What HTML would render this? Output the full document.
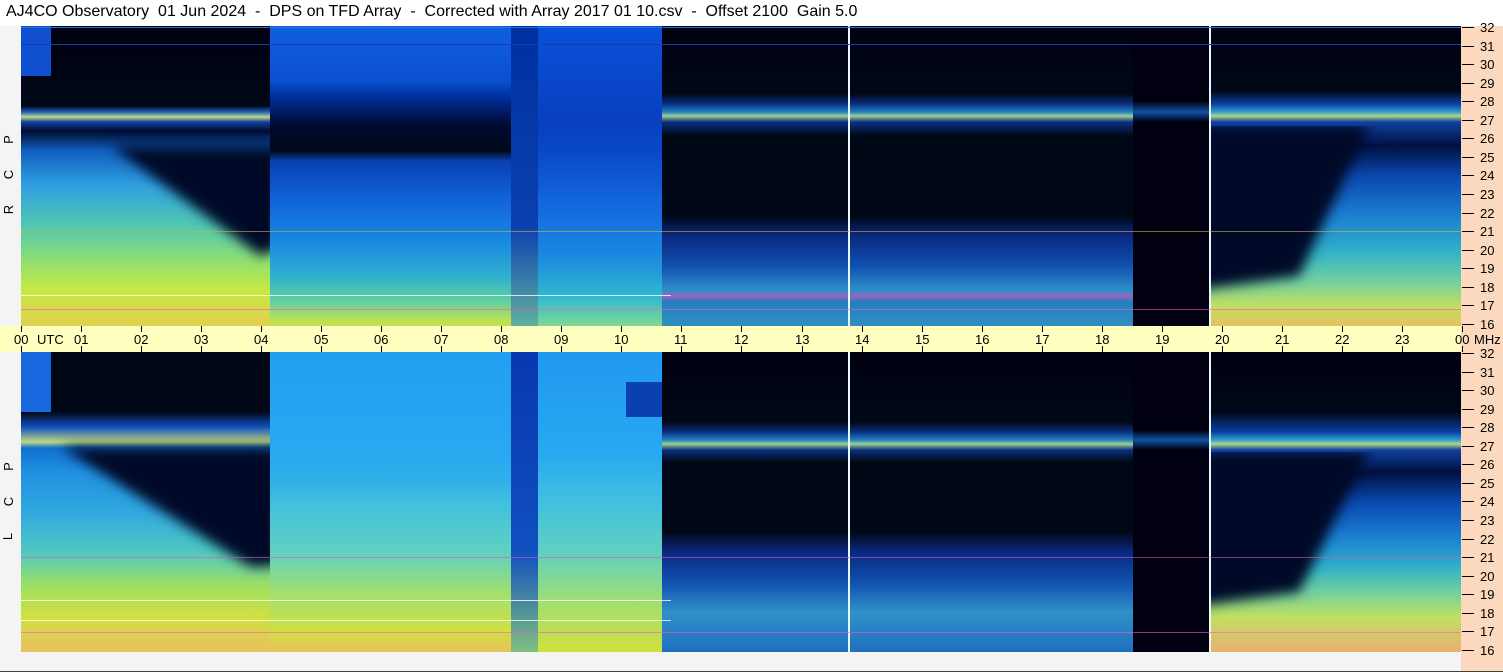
<!DOCTYPE html>
<html><head><meta charset="utf-8"><style>
*{margin:0;padding:0;box-sizing:border-box}
body{width:1503px;height:672px;background:#f4f4f4;position:relative;overflow:hidden;font-family:"Liberation Sans",sans-serif;color:#000}
.a{position:absolute}
.t{position:absolute;font-size:13px;line-height:13px}
.tick{position:absolute;width:12px;height:1px;background:#000;left:1462px}
.vl{position:absolute;width:2px;background:#e8f8ff}
.ln{position:absolute;height:1px}
.bl{filter:blur(6px)}
</style></head><body>
<div class="a" style="left:0;top:0;width:1503px;height:26px;background:#fff"></div>
<div class="a" style="left:6px;top:3px;font-size:16px;white-space:pre;line-height:18px">AJ4CO Observatory  01 Jun 2024  -  DPS on TFD Array  -  Corrected with Array 2017 01 10.csv  -  Offset 2100  Gain 5.0</div>
<div class="a" style="left:1461px;top:0;width:42px;height:672px;background:#fcd8bf"></div>
<div class="a" style="left:1461px;top:0;width:42px;height:26px;background:#fff"></div>

<!-- top panel -->
<div class="a" style="left:21px;top:26px;width:1440px;height:300px;background:#000010;overflow:hidden">
 <div class="a" style="left:0;top:0;width:249px;height:300px;background:linear-gradient(#000010 0,#000818 80px,#2060c0 86px,#c0d880 91px,#1040a0 96px,#000c30 105px,#1060c0 125px,#30a0e0 160px,#50c8b0 200px,#90e070 235px,#c8e840 265px,#e0d050 300px)"></div>
 <div class="a bl" style="left:0;top:0;width:249px;height:300px"><div class="a" style="left:0;top:120px;width:260px;height:110px;background:#000a28;clip-path:polygon(90px 0,260px 0,260px 100px,240px 110px)"></div></div>
 <div class="a" style="left:0;top:0;width:30px;height:50px;background:#1050d0"></div>
 <div class="a" style="left:249px;top:0;width:241px;height:300px;background:linear-gradient(#1060e0 0,#0a50d0 55px,#0030a0 70px,#000a30 100px,#000818 125px,#0840b0 135px,#1060d8 170px,#1888e0 215px,#30b0d0 250px,#60d0a0 275px,#c0e050 295px)"></div>
 <div class="a" style="left:490px;top:0;width:27px;height:300px;background:linear-gradient(#0030a0,#0a40b0 200px,#60b0a0 300px)"></div>
 <div class="a" style="left:517px;top:0;width:124px;height:300px;background:linear-gradient(#0a50d8 0,#0840c0 100px,#0a48c8 125px,#1468e0 180px,#1a88e0 230px,#30b8d0 270px,#80d890 300px)"></div>
 <div class="a" style="left:641px;top:0;width:500px;height:300px;background:linear-gradient(#000010 0,#000818 68px,#0a3080 78px,#2080c0 86px,#a0d090 90px,#0a3080 96px,#000816 110px,#000818 190px,#0a2880 210px,#1050b0 240px,#3090c8 265px,#a060c0 270px,#2080c0 276px,#3090c0 300px)"></div>
 <div class="a" style="left:1112px;top:0;width:76px;height:300px;background:linear-gradient(#000010 0,#000010 75px,#1050a0 86px,#000010 96px,#000010 300px)"></div>
 <div class="a" style="left:1188px;top:0;width:252px;height:300px;background:linear-gradient(#000010 0,#000818 65px,#0a40a0 78px,#30a0d0 86px,#b0d880 90px,#1040a0 96px,#001040 120px,#0a48b0 150px,#1a80d0 190px,#30b0c8 225px,#70d0a0 255px,#c0e060 280px,#e8c060 300px)"></div>
 <div class="a" style="left:1188px;top:100px;width:252px;height:200px;overflow:hidden"><div class="a bl" style="left:0;top:0;width:252px;height:200px"><div class="a" style="left:-20px;top:0;width:272px;height:200px;background:#000a28;clip-path:polygon(0 0,180px 0,110px 150px,0 165px)"></div></div></div>
 <div class="vl" style="left:827px;top:0;height:300px"></div>
 <div class="vl" style="left:1188px;top:0;height:300px"></div>
 <div class="ln" style="left:0;top:1px;width:1440px;background:#2070e0"></div>
 <div class="ln" style="left:0;top:18px;width:1440px;background:#1040b0"></div>
 <div class="ln" style="left:0;top:205px;width:1440px;background:#d0b040;opacity:.6"></div>
 <div class="ln" style="left:0;top:269px;width:650px;background:#fff;opacity:.8"></div>
 <div class="ln" style="left:0;top:283px;width:1440px;background:#ff50d0;opacity:.6"></div>
</div>

<!-- axis band -->
<div class="a" style="left:0;top:326px;width:1461px;height:26px;background:#ffffc0"></div>
<div id="ax"></div>

<!-- bottom panel -->
<div class="a" style="left:21px;top:352px;width:1440px;height:300px;background:#000010;overflow:hidden">
 <div class="a" style="left:0;top:0;width:249px;height:300px;background:linear-gradient(#000818 0,#000818 60px,#1050c0 75px,#c0d880 90px,#1070d0 96px,#2090e0 120px,#30a8e0 160px,#50c8c0 200px,#a0e060 235px,#d0e040 265px,#e8c060 300px)"></div>
 <div class="a bl" style="left:0;top:0;width:249px;height:300px"><div class="a" style="left:0;top:95px;width:260px;height:120px;background:#000a28;clip-path:polygon(40px 0,260px 0,260px 118px,230px 120px)"></div></div>
 <div class="a" style="left:0;top:0;width:30px;height:60px;background:#1868e0"></div>
 <div class="a" style="left:249px;top:0;width:241px;height:300px;background:linear-gradient(#20a0f0 0,#28a8f0 100px,#30b0e8 130px,#40c0e0 150px,#60d0c0 200px,#a0e070 240px,#d0e040 280px,#e8c060 300px)"></div>
 <div class="a" style="left:490px;top:0;width:27px;height:300px;background:linear-gradient(#0838b0,#1050c0 200px,#80c080 300px)"></div>
 <div class="a" style="left:517px;top:0;width:124px;height:300px;background:linear-gradient(#2098f0 0,#28a8f0 100px,#40c0e0 150px,#60d0c0 200px,#a0e070 250px,#d0e040 300px)"></div>
 <div class="a" style="left:605px;top:30px;width:36px;height:35px;background:#0a40b0"></div>
 <div class="a" style="left:641px;top:0;width:500px;height:300px;background:linear-gradient(#000010 0,#000818 70px,#0a3080 80px,#2080c0 88px,#a0d090 92px,#0a3080 98px,#000816 110px,#000818 180px,#0a2880 200px,#1050b0 230px,#3090c8 260px,#2070c0 300px)"></div>
 <div class="a" style="left:1112px;top:0;width:76px;height:300px;background:linear-gradient(#000010 0,#000010 78px,#1050a0 88px,#000010 98px,#000010 300px)"></div>
 <div class="a" style="left:1188px;top:0;width:252px;height:300px;background:linear-gradient(#000010 0,#000818 60px,#0a40a0 80px,#30a0d0 88px,#b0d880 92px,#1040a0 98px,#001040 120px,#0a48b0 150px,#1a80d0 185px,#30b0c8 215px,#70d0a0 240px,#c0e060 265px,#e8b070 300px)"></div>
 <div class="a" style="left:1188px;top:100px;width:252px;height:200px;overflow:hidden"><div class="a bl" style="left:0;top:0;width:252px;height:200px"><div class="a" style="left:-20px;top:0;width:272px;height:200px;background:#000a28;clip-path:polygon(0 0,180px 0,110px 140px,0 155px)"></div></div></div>
 <div class="vl" style="left:827px;top:0;height:300px"></div>
 <div class="vl" style="left:1188px;top:0;height:300px"></div>
 <div class="ln" style="left:0;top:205px;width:1440px;background:#e050c0;opacity:.6"></div>
 <div class="ln" style="left:0;top:248px;width:650px;background:#fff;opacity:.8"></div>
 <div class="ln" style="left:0;top:268px;width:650px;background:#fff;opacity:.8"></div>
 <div class="ln" style="left:0;top:280px;width:1440px;background:#ff50d0;opacity:.6"></div>
</div>

<!-- left labels -->
<div class="t" style="left:4px;top:133px;transform:rotate(-90deg)">P</div>
<div class="t" style="left:4px;top:168px;transform:rotate(-90deg)">C</div>
<div class="t" style="left:4px;top:203px;transform:rotate(-90deg)">R</div>
<div class="t" style="left:4px;top:460px;transform:rotate(-90deg)">P</div>
<div class="t" style="left:4px;top:495px;transform:rotate(-90deg)">C</div>
<div class="t" style="left:4px;top:530px;transform:rotate(-90deg)">L</div>

<div id="ticks"></div>
<script>
var h='';
for(var v=32;v>=16;v--){
 [27,353].forEach(function(b){
  var y=Math.round(b+(32-v)*18.56);
  h+='<div class="tick" style="top:'+y+'px"></div><div class="t" style="left:1480px;top:'+(y-6)+'px">'+v+'</div>';
 });
}
document.getElementById('ticks').innerHTML=h;
var a='';
for(var i=0;i<=24;i++){
 var x=Math.round(21+60.04*i);
 var l=(i%24<10?'0':'')+(i%24);
 a+='<div class="a" style="left:'+x+'px;top:326px;width:1px;height:6px;background:#000"></div>';
 a+='<div class="a" style="left:'+x+'px;top:346px;width:1px;height:6px;background:#000"></div>';
 a+='<div class="t" style="left:'+(x-7)+'px;top:333px">'+l+'</div>';
}
a+='<div class="t" style="left:37px;top:333px">UTC</div><div class="t" style="left:1474px;top:333px">MHz</div>';
document.getElementById('ax').innerHTML=a;
</script>
<div class="a" style="left:0;top:671px;width:1503px;height:1px;background:#404040"></div>
</body></html>
